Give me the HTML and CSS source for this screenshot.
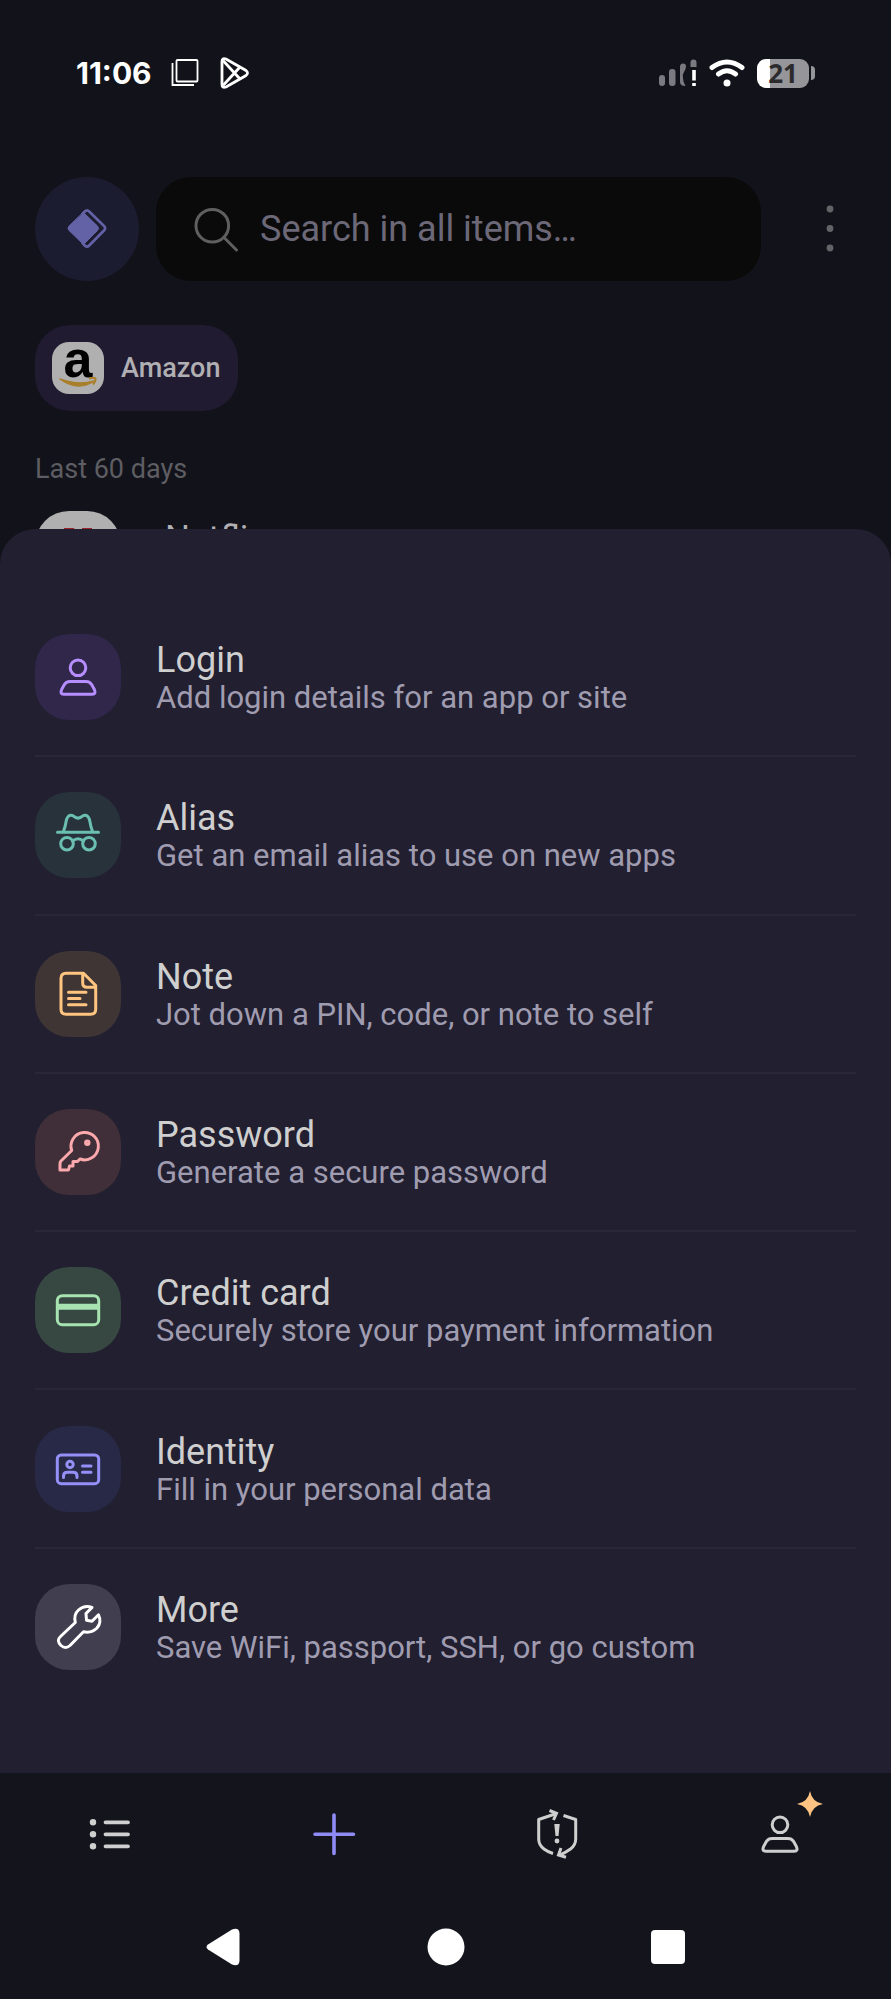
FILE: index.html
```html
<!DOCTYPE html>
<html lang="en">
<head>
  <meta charset="UTF-8" />
  <meta name="viewport" content="width=device-width, initial-scale=1" />
  <title>Create item</title>
  <link rel="stylesheet" href="styles.css">
</head>
<body>
  <svg class="sprite" aria-hidden="true">
    <symbol id="person" viewBox="0 0 44 44">
      <circle cx="22" cy="12.8" r="7.8" />
      <path d="M14 26.5h16q3.5 0 5.5 2.8l2.6 4.6q2.6 5.3-2 5.3h-28.2q-4.6 0-2-5.3l2.6-4.6q2-2.8 5.5-2.8z" />
    </symbol>
  </svg>

  <div class="status-bar">
    <span class="time">11:06</span>
    <svg class="status-icon" width="28" height="30" viewBox="0 0 28 30">
      <rect x="5.500" y="2" width="21" height="21.500" rx="1" stroke-width="1.800" />
      <path d="M1.500 5V27H23" stroke-width="1.800" />
    </svg>
    <svg class="status-icon play" width="30" height="32" viewBox="0 0 30 32">
      <path d="M2 4.500Q2 .5 6 2L26 13.500Q29 16 26 18.500L6 30Q2 31.500 2 27.500Z" />
      <path d="M3 3.500L20 22M3 28.500L20 10" />
    </svg>
    <div class="status-right">
      <svg width="38" height="30" viewBox="0 0 38 30">
        <g fill="#7b7a80">
          <rect x="0" y="17" width="6" height="11" rx="3" />
          <rect x="10" y="11" width="6.500" height="17" rx="3" />
          <path d="M21 9Q21 5.500 24 5.500T27 8.500Q27 11 25 14T24 20Q24 24 26.500 28Q21 28 21 24Z" />
          <path d="M31.500 9V4.500Q31.500 1.500 34.500 1.500T37.500 4.500V9Z" />
        </g>
        <path d="M33.200 12h3.600v10.500h-3.600zM33.200 25h3.600v3h-3.600z" fill="#fff" />
      </svg>
      <svg width="36" height="30" viewBox="0 0 36 30">
        <path d="M3 9.500Q18 -1.500 33 9.500M9.500 16Q18 9.500 26.500 16" fill="none" stroke="#fff" stroke-width="5" stroke-linecap="round" />
        <circle cx="18" cy="25" r="3.500" fill="#fff" />
      </svg>
      <div class="battery"><span class="battery-level">21</span></div>
    </div>
  </div>

  <header class="search-row">
    <button class="vault-btn" aria-label="Vault">
      <svg class="icon" viewBox="0 0 44 44">
        <path d="M18.500 6.500L32.500 20Q34.500 22.300 32.500 24.500L18.500 38.500L4 24.500Q1.700 22.300 4 20Z" fill="#6462a6" stroke-width="1" />
        <path d="M17.500 8L19.800 5.500Q22 3.300 24.200 5.500L39 20Q41.300 22.300 39 24.500L24.200 39.500Q22 41.700 19.800 39.500L17.500 37" stroke-width="2.600" />
      </svg>
    </button>
    <label class="search">
      <svg class="icon" viewBox="0 0 44 44">
        <circle cx="18.300" cy="18.700" r="16.300" />
        <path d="M30 30.500L42.500 43" />
      </svg>
      <input type="text" placeholder="Search in all items…" aria-label="Search in all items" />
    </label>
    <button class="menu-btn" aria-label="Options">
      <svg class="icon" viewBox="0 0 44 44">
        <circle cx="22" cy="3" r="3.400" /><circle cx="22" cy="22.500" r="3.400" /><circle cx="22" cy="42" r="3.400" />
      </svg>
    </button>
  </header>

  <main class="items">
    <button class="chip">
      <svg width="52" height="52" viewBox="0 0 52 52">
        <rect width="52" height="52" rx="17" fill="#b0b0b0" />
        <text x="26" y="35" class="amazon-a">a</text>
        <path d="M8 37Q26 50 42 39Q27 44 8 37Z" fill="#a97f2b" stroke="#a97f2b" stroke-width="1.500" stroke-linejoin="round" />
        <path d="M37 36.500Q42 35 43.500 36.500Q44 39 41 42.500" fill="none" stroke="#a97f2b" stroke-width="2" />
      </svg>
      Amazon
    </button>
    <h2>Last 60 days</h2>
    <a class="item" href="#">
      <svg width="86" height="86" viewBox="0 0 86 86">
        <rect width="86" height="86" rx="34" fill="#b0b0b0" />
        <path d="M29 17h10l8 24V17h10v52H47L39 45v24H29z" fill="#99222b" />
      </svg>
      Netflix
    </a>
  </main>

  <section class="sheet">
    <ul>
      <li>
        <a href="#">
          <span class="badge login"><svg class="icon"><use href="#person" /></svg></span>
          <span class="text"><strong>Login</strong><small>Add login details for an app or site</small></span>
        </a>
      </li>
      <li>
        <a href="#">
          <span class="badge alias">
            <svg class="icon" viewBox="0 0 44 44">
              <path d="M1.500 19.300H42.500M7.300 19Q9.500 13 10 9Q11 3 14.500 2.300Q16.500 2 18.500 3.800Q22 6.500 25.500 3.800Q27.500 2 29.500 2.300Q33 3 34 9Q34.500 13 36.700 19" />
              <circle cx="11" cy="30.700" r="6.300" /><circle cx="33" cy="30.700" r="6.300" />
              <path d="M16.500 28Q22 23.500 27.500 28" />
            </svg>
          </span>
          <span class="text"><strong>Alias</strong><small>Get an email alias to use on new apps</small></span>
        </a>
      </li>
      <li>
        <a href="#">
          <span class="badge note">
            <svg class="icon" viewBox="0 0 44 44">
              <path d="M10 1.300H27.500L39.700 13.500V37.300Q39.700 42.300 34.700 42.300H10Q5 42.300 5 37.300V6.300Q5 1.300 10 1.300ZM26.700 2V11Q26.700 15.300 31 15.300H39" />
              <path d="M12.500 20.300H30M12.500 26.500H24M12.500 32.700H30" />
            </svg>
          </span>
          <span class="text"><strong>Note</strong><small>Jot down a PIN, code, or note to self</small></span>
        </a>
      </li>
      <li>
        <a href="#">
          <span class="badge password">
            <svg class="icon" viewBox="0 0 44 44">
              <path d="M24 29A13.700 13.700 0 1 0 15.700 20.500L5 31Q4 32 4 33.500V40H12.500L13.500 36H17V31.500H21.500Z" />
              <circle cx="31.300" cy="12.700" r="1.700" />
            </svg>
          </span>
          <span class="text"><strong>Password</strong><small>Generate a secure password</small></span>
        </a>
      </li>
      <li>
        <a href="#">
          <span class="badge card">
            <svg class="icon" viewBox="0 0 44 44">
              <rect x="1.300" y="7.700" width="41.400" height="29" rx="5" />
              <path d="M1.300 18.700H42.700" stroke-width="6" stroke-linecap="butt" />
            </svg>
          </span>
          <span class="text"><strong>Credit card</strong><small>Securely store your payment information</small></span>
        </a>
      </li>
      <li>
        <a href="#">
          <span class="badge identity">
            <svg class="icon" viewBox="0 0 44 44">
              <rect x="1.300" y="8" width="41.400" height="28.700" rx="4" />
              <circle cx="14" cy="17.500" r="3.200" />
              <path d="M7.500 30.500V29Q7.500 25.300 11.500 25.300H17Q21 25.300 21 29V30.500M26.500 19H35M26.500 25.300H35" />
            </svg>
          </span>
          <span class="text"><strong>Identity</strong><small>Fill in your personal data</small></span>
        </a>
      </li>
      <li>
        <a href="#">
          <span class="badge more">
            <svg class="icon" viewBox="0 0 44 44">
              <path d="M19.300 17.500Q17.500 9.500 22.500 5Q28.500 -.2 36 2.400L30 8.500L30.500 15.200L36 16.200L42.500 9.800Q46 17 41 23Q35.500 28.500 27.500 26.700L14 40.500Q9.500 44.500 5 40.500Q0 35.500 4.500 31.500Z" />
            </svg>
          </span>
          <span class="text"><strong>More</strong><small>Save WiFi, passport, SSH, or go custom</small></span>
        </a>
      </li>
    </ul>
  </section>

  <nav class="tabs">
    <a href="#" aria-label="Items">
      <svg class="icon" viewBox="0 0 44 44">
        <g fill="currentColor" stroke="none"><circle cx="4" cy="10.300" r="3.200" /><circle cx="4" cy="22.300" r="3.200" /><circle cx="4" cy="34.300" r="3.200" /></g>
        <path d="M16.500 10.300H39M16.500 22.300H39M16.500 34.300H39" stroke-width="3.800" />
      </svg>
    </a>
    <a href="#" class="active" aria-label="Create">
      <svg class="icon" viewBox="0 0 44 44"><path d="M22 3V41.500M3 22.300H41.500" stroke-width="3.600" /></svg>
    </a>
    <a href="#" aria-label="Security">
      <svg class="icon" viewBox="0 0 44 44">
        <path d="M21.500 1.500L3.700 7.500V27Q3.700 33 9 37Q13 40 18 41.500M28.500 3.500L40.700 7.500V27Q40.700 33 35.500 37Q30 41 24 43.300" stroke-linecap="butt" />
        <path d="M14.500 -1.500L21.500 1.300L18.500 8M26 36L23.500 43L31 45.300" stroke-linejoin="miter" stroke-linecap="butt" />
        <path d="M19.300 12h5.400l-1.200 12h-3z" fill="currentColor" stroke="none" />
        <circle cx="22" cy="29" r="2.400" fill="currentColor" stroke="none" />
      </svg>
    </a>
    <a href="#" aria-label="Profile">
      <svg class="icon"><use href="#person" /></svg>
      <svg class="star" viewBox="0 0 26 26"><path d="M13 0Q15 11 26 13Q15 15 13 26Q11 15 0 13Q11 11 13 0Z" fill="#ffc483" /></svg>
    </a>
  </nav>

  <div class="system-nav">
    <button aria-label="Back"><svg width="34" height="38" viewBox="0 0 34 38"><path d="M2 16.500L26 1.500Q33 -1 33.500 5V33Q33 39 26 36.500L2 21.500Q-1 19 2 16.500Z" /></svg></button>
    <button aria-label="Home"><svg width="38" height="38" viewBox="0 0 38 38"><circle cx="19" cy="19" r="18.500" /></svg></button>
    <button aria-label="Recents"><svg width="34" height="34" viewBox="0 0 34 34"><rect width="34" height="34" rx="4" /></svg></button>
  </div>
</body>
</html>
```

FILE: styles.css
```css
* {
  box-sizing: border-box;
}
body {
  margin: 0;
  min-height: 100vh;
  display: flex;
  flex-direction: column;
  background: #12121a;
  color: #cfcfcf;
  font-family: Roboto, sans-serif;
}
a {
  color: inherit;
  text-decoration: none;
}
button {
  border: none;
  padding: 0;
  background: none;
  color: inherit;
  font-family: inherit;
  cursor: pointer;
}
.sprite {
  position: absolute;
  width: 0;
  height: 0;
}
.icon {
  width: 44px;
  height: 44px;
  overflow: visible;
  fill: none;
  stroke: currentColor;
  stroke-width: 3;
  stroke-linecap: round;
  stroke-linejoin: round;
}

/* status bar */
.status-bar {
  display: flex;
  align-items: center;
  height: 146px;
  padding: 0 76px;
  color: white;
}
.time {
  font-family: Inter, sans-serif;
  font-size: 30px;
  font-weight: 700;
}
.status-icon {
  margin-left: 19px;
  fill: none;
  stroke: white;
}
.play {
  margin-left: 21px;
  stroke-width: 2.8;
}
.status-right {
  display: flex;
  align-items: center;
  gap: 12px;
  margin-left: auto;
}
.battery {
  display: flex;
  align-items: center;
  gap: 2px;
}
.battery::after {
  content: "";
  width: 4px;
  height: 14px;
  border-radius: 0 4px 4px 0;
  background: #96959a;
}
.battery-level {
  width: 52px;
  border-radius: 9px;
  background: linear-gradient(to right, white 13px, #96959a 13px);
  color: #2b2b2e;
  font-family: "Open Sans", sans-serif;
  font-size: 26px;
  font-weight: 700;
  line-height: 29px;
  text-align: center;
}

/* search */
.search-row {
  display: flex;
  gap: 17px;
  margin-top: 31px;
  padding: 0 9px 0 35px;
}
.vault-btn, .menu-btn {
  width: 104px;
  height: 104px;
  border-radius: 50%;
}
.vault-btn {
  background: #1c1c30;
  color: #6462a6;
}
.menu-btn {
  color: #636267;
}
.menu-btn .icon {
  fill: currentColor;
  stroke: none;
}
.search {
  flex: 1;
  display: flex;
  align-items: center;
  gap: 22px;
  min-width: 0;
  padding: 0 38px;
  border-radius: 35px;
  background: #0a0a0a;
  color: #5f5f5f;
}
.search .icon {
  flex: none;
}
.search input {
  flex: 1;
  min-width: 0;
  padding: 0;
  border: none;
  outline: none;
  background: none;
  color: #cfcfcf;
  font-family: inherit;
  font-size: 36px;
}
.search input::placeholder {
  color: #6c6878;
  opacity: 1;
}

/* dimmed list behind the sheet */
.items {
  padding: 44px 35px 0;
}
.chip {
  display: flex;
  align-items: center;
  gap: 17px;
  height: 86px;
  padding: 0 18px 0 17px;
  border-radius: 35px;
  background: #211b31;
  color: #b0afb3;
  font-size: 27px;
  font-weight: 500;
}
.chip svg {
  overflow: visible;
}
.amazon-a {
  font-family: "Liberation Sans", sans-serif;
  font-size: 52px;
  font-weight: 700;
  text-anchor: middle;
}
.items h2 {
  margin: 43px 0 27px;
  color: #5d5d62;
  font-size: 27px;
  font-weight: 400;
  line-height: 30px;
}
.item {
  display: flex;
  gap: 44px;
  color: #b0afb3;
  font-size: 35px;
  line-height: 56px;
}

/* bottom sheet */
.sheet {
  position: relative;
  flex: 1;
  display: flex;
  margin-top: -68px;
  padding: 68px 35px;
  border-radius: 35px 35px 0 0;
  background: #211f30;
}
.sheet ul {
  flex: 1;
  display: flex;
  flex-direction: column;
  margin: 0;
  padding: 0;
  list-style: none;
}
.sheet li {
  flex: 1;
  display: flex;
  border-top: 2px solid #292738;
}
.sheet li:first-child {
  border-color: transparent;
}
.sheet a {
  flex: 1;
  display: flex;
  align-items: center;
  gap: 35px;
}
.badge {
  flex: none;
  display: flex;
  align-items: center;
  justify-content: center;
  width: 86px;
  height: 86px;
  border-radius: 34px;
}
.login {
  background: #30274a;
  color: #b78eff;
}
.alias {
  background: #27323b;
  color: #6bbfb1;
}
.note {
  background: #3e3534;
  color: #ffc580;
}
.password {
  background: #402f38;
  color: #fba9ac;
}
.card {
  background: #364841;
  color: #a6e3b1;
}
.identity {
  background: #282947;
  color: #9490f8;
}
.more {
  background: #403e4f;
  color: white;
}
.text strong, .text small {
  display: block;
  font-weight: 400;
}
.text strong {
  font-size: 36px;
  line-height: 42px;
}
.text small {
  color: #a09cb0;
  font-size: 31px;
  line-height: 34px;
}

/* tab bar */
.tabs {
  display: flex;
  background: #14141d;
}
.tabs a {
  flex: 1;
  display: grid;
  place-items: center;
  height: 122px;
  position: relative;
}
.tabs .active {
  color: #8f8bf5;
}
.star {
  position: absolute;
  top: 18px;
  left: calc(50% + 17px);
  width: 26px;
  height: 26px;
}
.system-nav {
  display: flex;
  justify-content: center;
  background: #14141d;
}
.system-nav button {
  display: grid;
  place-items: center;
  width: 25%;
  height: 104px;
}
.system-nav svg {
  fill: white;
}
```
